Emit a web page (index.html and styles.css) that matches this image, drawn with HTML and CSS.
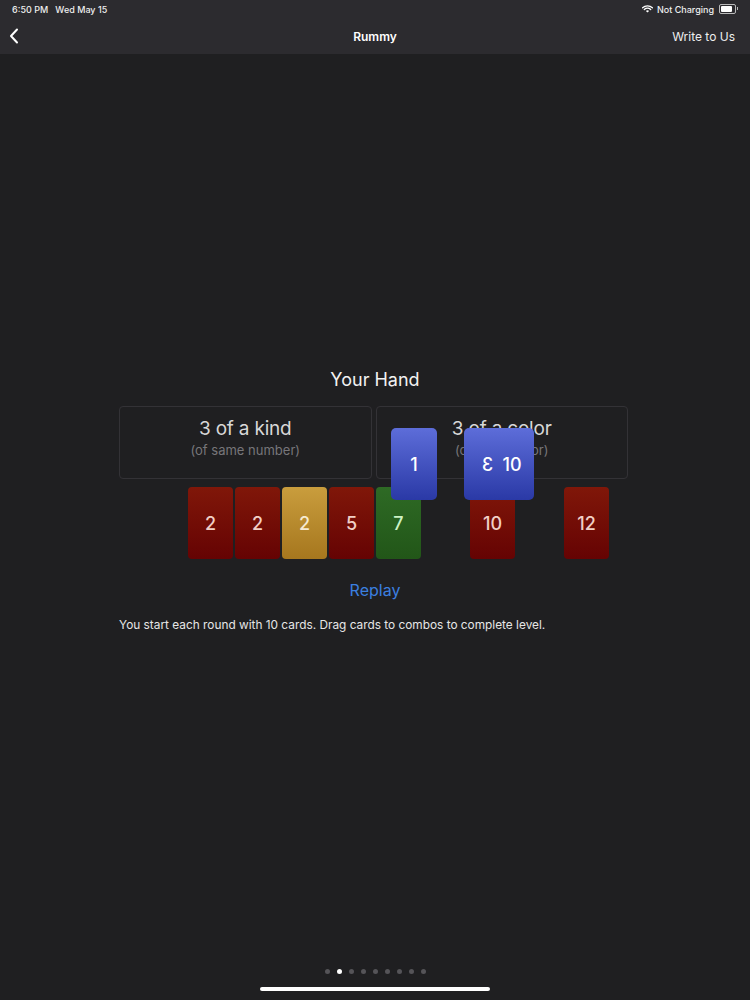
FILE: index.html
```html
<!DOCTYPE html>
<html lang="en">
<head>
    <meta charset="UTF-8">
    <meta name="viewport" content="width=device-width, initial-scale=1.0">
    <title>Rummy</title>
    <link rel="stylesheet" href="styles.css">
</head>
<body>
    <div class="screen">
        <!-- Barra de estado -->
        <div class="status-bar">
            <span class="time">6:50 PM&nbsp;&nbsp;&nbsp;Wed May 15</span>
            <span class="status-right">
                <svg class="wifi" width="11" height="8" viewBox="0 0 11 8">
                    <path d="M0.6 2.8 A7 7 0 0 1 10.4 2.8" fill="none" stroke="#fff" stroke-width="1.3" stroke-linecap="round"/>
                    <path d="M2.3 4.5 A4.6 4.6 0 0 1 8.7 4.5" fill="none" stroke="#fff" stroke-width="1.3" stroke-linecap="round"/>
                    <path d="M5.5 7.6 L3.9 6 A2.3 2.3 0 0 1 7.1 6 Z" fill="#fff"/>
                </svg>
                Not Charging
                <span class="battery"><span class="battery-level"></span></span>
            </span>
        </div>

        <!-- Navegación -->
        <div class="nav-bar">
            <svg class="back" width="10" height="16" viewBox="0 0 10 16">
                <path d="M8 1.5 L2 8 L8 14.5" fill="none" stroke="#fff" stroke-width="2" stroke-linecap="round" stroke-linejoin="round"/>
            </svg>
            <span class="nav-title">Rummy</span>
            <span class="nav-action">Write to Us</span>
        </div>

        <div class="content">
            <h2 class="hand-title">Your Hand</h2>

            <div class="board">
                <div class="combos">
                    <div class="combo">
                        <div class="combo-name">3 of a kind</div>
                        <div class="combo-hint">(of same number)</div>
                    </div>
                    <div class="combo">
                        <div class="combo-name">3 of a color</div>
                        <div class="combo-hint">(of same color)</div>
                    </div>
                </div>

                <div class="hand">
                    <div class="card red">2</div>
                    <div class="card red">2</div>
                    <div class="card gold">2</div>
                    <div class="card red">5</div>
                    <div class="card green">7</div>
                    <div class="card empty"></div>
                    <div class="card red">10</div>
                    <div class="card empty"></div>
                    <div class="card red">12</div>
                </div>

                <!-- Cartas arrastradas -->
                <div class="card blue dragging card-1">1</div>
                <div class="card blue dragging card-3"><span class="flip">3</span></div>
                <div class="card blue dragging card-10">10</div>
            </div>

            <a class="replay">Replay</a>
            <p class="info">You start each round with 10 cards. Drag cards to combos to complete level.</p>
        </div>

        <div class="footer">
            <div class="dots">
                <span class="dot"></span>
                <span class="dot active"></span>
                <span class="dot"></span>
                <span class="dot"></span>
                <span class="dot"></span>
                <span class="dot"></span>
                <span class="dot"></span>
                <span class="dot"></span>
                <span class="dot"></span>
            </div>
            <div class="home-bar"></div>
        </div>
    </div>
</body>
</html>
```

FILE: styles.css
```css
body {
    margin: 0;
    font-family: Inter, "Noto Sans", sans-serif;
    background-color: #1f1f21;
    color: #eee;
}

.screen {
    width: 750px;
    height: 1000px;
    display: flex;
    flex-direction: column;
    overflow: hidden;
}

.status-bar {
    height: 18px;
    background-color: #2c2b2f;
    display: flex;
    align-items: center;
    justify-content: space-between;
    padding: 0 14px 0 12px;
    font-size: 9px;
    font-weight: 500;
    color: #eee;
}

.status-right {
    display: flex;
    align-items: center;
    gap: 3px;
}

.wifi {
    margin-right: 1px;
}

.battery {
    width: 13px;
    height: 6px;
    border: 1px solid #bbb;
    border-radius: 2px;
    padding: 1px;
    margin-left: 2px;
    position: relative;
}

.battery::after {
    content: "";
    position: absolute;
    right: -3px;
    top: 2px;
    width: 1px;
    height: 3px;
    background: #bbb;
}

.battery-level {
    display: block;
    width: 11px;
    height: 6px;
    background: #fff;
    border-radius: 1px;
}

.nav-bar {
    height: 36px;
    background-color: #2c2b2f;
    display: flex;
    align-items: center;
    justify-content: space-between;
    padding: 0 15px 0 9px;
    position: relative;
}

.nav-title {
    position: absolute;
    left: 0;
    right: 0;
    text-align: center;
    font-size: 12px;
    font-weight: 600;
    color: #fff;
}

.nav-action {
    font-size: 12px;
    color: #eee;
}

.content {
    flex: 1;
    display: flex;
    flex-direction: column;
    align-items: center;
    padding-top: 314px;
}

.hand-title {
    margin: 0;
    font-size: 18px;
    font-weight: 400;
    line-height: 24px;
    color: #f2f2f2;
}

.board {
    position: relative;
    align-self: flex-start;
    width: 509px;
    margin: 14px 0 0 119px;
}

.combos {
    display: grid;
    grid-template-columns: 1fr 1fr;
    gap: 4px;
}

.combo {
    height: 73px;
    border: 1px solid #333236;
    border-radius: 4px;
    display: flex;
    flex-direction: column;
    align-items: center;
    padding-top: 10px;
    box-sizing: border-box;
}

.combo-name {
    font-size: 19px;
    line-height: 24px;
    letter-spacing: -0.2px;
    color: #d8d8d8;
}

.combo-hint {
    font-size: 13px;
    line-height: 18px;
    color: #77767a;
}

.hand {
    display: flex;
    gap: 2px;
    margin-top: 8px;
    padding-left: 69px;
}

.card {
    width: 45px;
    height: 72px;
    border-radius: 4px;
    display: flex;
    align-items: center;
    justify-content: center;
    font-size: 18px;
    font-weight: 500;
}

.card.red {
    background: linear-gradient(#801709, #650303);
    color: #f1cfc6;
}

.card.gold {
    background: linear-gradient(#c99d3d, #a6771e);
    color: #f6ead0;
}

.card.green {
    background: linear-gradient(#2e6a25, #225618);
    color: #cdf2c4;
}

.card.empty {
    background: transparent;
}

.card.blue {
    background: linear-gradient(#5d6dd9, #2a39a6);
    color: #fff;
    border-radius: 5px;
}

.dragging {
    position: absolute;
    top: 22px;
    width: 46px;
    height: 72px;
}

.card-1 {
    left: 272px;
}

.card-3 {
    left: 345px;
}

.card-10 {
    left: 369px;
    padding-left: 2px;
    box-sizing: border-box;
}

.flip {
    position: relative;
    z-index: 2;
    display: inline-block;
    transform: scaleX(-1);
    margin-left: 1px;
}

.replay {
    margin-top: 20px;
    font-size: 16px;
    line-height: 22px;
    color: #3b7fe0;
}

.info {
    align-self: flex-start;
    margin: 16px 0 0 119px;
    font-size: 11.85px;
    line-height: 16px;
    color: #e6e6e6;
}

.footer {
    height: 40px;
    display: flex;
    flex-direction: column;
    align-items: center;
}

.dots {
    display: flex;
    gap: 7px;
    margin-top: 9px;
    margin-left: 1px;
}

.dot {
    width: 5px;
    height: 5px;
    border-radius: 50%;
    background-color: #555458;
}

.dot.active {
    background-color: #fff;
}

.home-bar {
    width: 230px;
    height: 4px;
    border-radius: 2px;
    background-color: #fff;
    margin-top: 13px;
}
```
